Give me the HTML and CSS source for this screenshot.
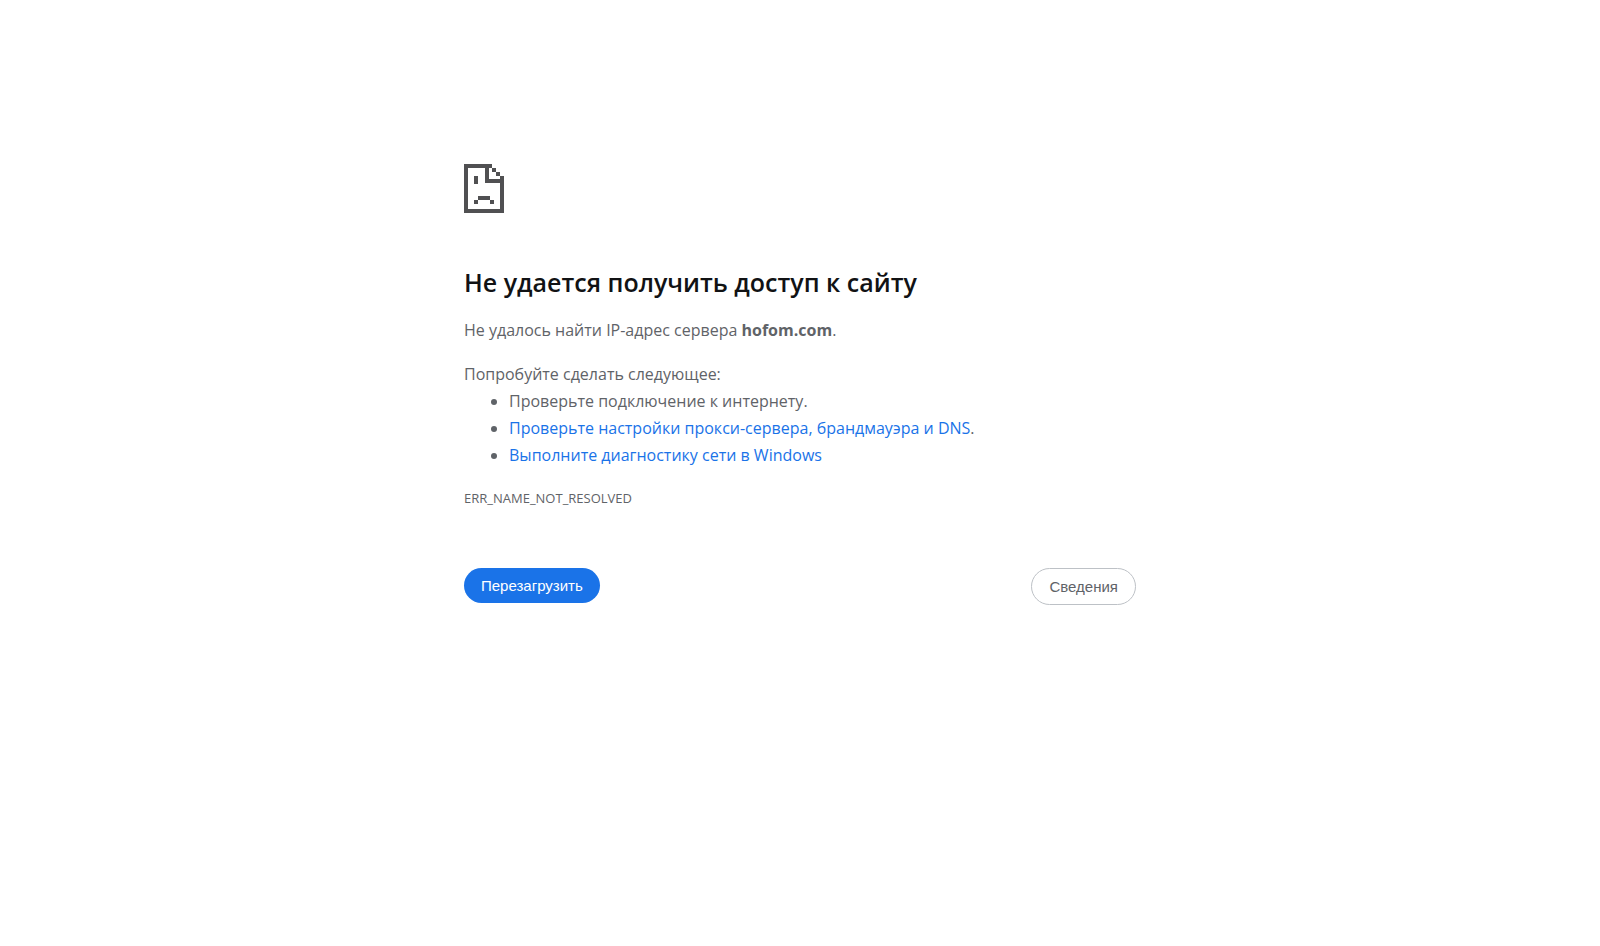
FILE: index.html
```html
<!DOCTYPE html>
<html lang="ru">
<head>
<meta charset="utf-8">
<title>hofom.com</title>
<link rel="stylesheet" href="styles.css">
</head>
<body>
<main class="page">
  <svg class="icon" viewBox="0 0 40 49" width="40" height="49" aria-hidden="true">
    <path d="M0 0H28V4H25V15H36V12H40V49H0ZM4 4V45H36V19H21V4ZM28 4H32V8H28ZM32 8H36V12H32ZM10 12H14V20H10ZM14 32H26V36H14ZM10 36H14V40H10ZM26 36H30V40H26Z" fill="#505052" fill-rule="evenodd"/>
  </svg>
  <h1 class="title">Не удается получить доступ к сайту</h1>
  <p class="summary">Не удалось найти IP-адрес сервера <strong>hofom.com</strong>.</p>
  <p class="hint">Попробуйте сделать следующее:</p>
  <ul class="suggestions">
    <li>Проверьте подключение к интернету.</li>
    <li><a href="#">Проверьте настройки прокси-сервера, брандмауэра и DNS</a>.</li>
    <li><a href="#">Выполните диагностику сети в Windows</a></li>
  </ul>
  <p class="code">ERR_NAME_NOT_RESOLVED</p>
  <div class="actions">
    <button class="button primary" type="button">Перезагрузить</button>
    <button class="button secondary" type="button">Сведения</button>
  </div>
</main>
</body>
</html>
```
FILE: styles.css
```css
body {
  margin: 0;
  background: #fff;
  color: #5f6368;
  font: 16px/27px "Open Sans", "Noto Sans", sans-serif;
}

.page {
  box-sizing: border-box;
  max-width: 672px;
  margin: 0 auto;
  padding-top: 164px;
}

.icon {
  display: block;
}

.title {
  margin: 52px 0 18px;
  color: #111214;
  font-size: 25px;
  font-weight: 600;
  line-height: 34px;
}

.summary,
.hint {
  margin: 0;
}

.hint {
  margin-top: 17px;
}

.suggestions {
  margin: 0;
  padding-left: 45px;
}

.suggestions a {
  color: #1a73e8;
  text-decoration: none;
}

.code {
  margin: 16px 0 0;
  font-size: 13px;
}

.actions {
  display: flex;
  justify-content: space-between;
  align-items: flex-start;
  margin-top: 56px;
}

.button {
  padding: 8px 17px;
  border: 0;
  border-radius: 20px;
  font: 15px/19px "Liberation Sans", Arial, sans-serif;
  cursor: pointer;
}

.primary {
  background: #1a73e8;
  color: #fff;
}

.secondary {
  border: 1px solid #bdc1c6;
  background: #fff;
  color: #5f6368;
}
```
